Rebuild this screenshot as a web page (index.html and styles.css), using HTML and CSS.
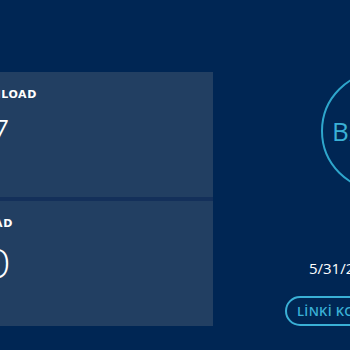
FILE: index.html
```html
<!DOCTYPE html>
<html lang="tr">
<head>
<meta charset="utf-8">
<title>Speed test result</title>
<link rel="stylesheet" href="styles.css">
</head>
<body>
<main class="page">
  <section class="results">
    <div class="card">
      <div class="label">DOWNLOAD</div>
      <div class="value">27</div>
    </div>
    <div class="card">
      <div class="label">UPLOAD</div>
      <div class="value">10</div>
    </div>
  </section>
  <aside class="side">
    <div class="circle">BAŞLAT</div>
    <div class="date">5/31/2024, 10:42:18</div>
    <button class="btn">LİNKİ KOPYALA</button>
  </aside>
</main>
</body>
</html>
```
FILE: styles.css
```css
html, body {
  margin: 0;
  background: #002654;
  overflow: hidden;
  font-family: "Open Sans", "DejaVu Sans", sans-serif;
}

.page {
  display: flex;
  align-items: flex-start;
  width: max-content;
  margin-left: -53px;
  padding-top: 72px;
}

.results {
  width: 266px;
  display: flex;
  flex-direction: column;
  gap: 4px;
  background: #14305a;
}

.card {
  height: 125px;
  box-sizing: border-box;
  background: #223f62;
  padding: 16px 0 0 12px;
  color: #ffffff;
}

.label {
  font-family: "DejaVu Sans", sans-serif;
  font-size: 11px;
  font-weight: 700;
  line-height: 14px;
  letter-spacing: 0.6px;
}

.value {
  margin-top: 8px;
  margin-left: 3px;
  font-family: "Lato", "Open Sans", sans-serif;
  font-size: 41px;
  font-weight: 300;
  line-height: 48px;
}

.side {
  width: 336px;
  flex-shrink: 0;
  display: flex;
  flex-direction: column;
  align-items: center;
  margin-top: -1px;
}

.circle {
  width: 120px;
  height: 120px;
  box-sizing: border-box;
  border: 2px solid #2ea6cc;
  border-radius: 50%;
  display: flex;
  align-items: center;
  justify-content: center;
  color: #3ab0d6;
  font-size: 26px;
  letter-spacing: 1px;
  white-space: nowrap;
}

.date {
  margin-top: 68px;
  padding-right: 6px;
  color: #ffffff;
  font-size: 15px;
  line-height: 18px;
  white-space: nowrap;
}

.btn {
  margin-top: 19px;
  width: 192px;
  height: 30px;
  box-sizing: border-box;
  border: 2px solid #3ab0d6;
  border-radius: 15px;
  background: transparent;
  padding: 0 10px;
  display: flex;
  align-items: center;
  justify-content: flex-start;
  color: #3ab0d6;
  font-family: "Open Sans", sans-serif;
  font-size: 13px;
  font-weight: 600;
  letter-spacing: 0.3px;
  white-space: nowrap;
}
```
